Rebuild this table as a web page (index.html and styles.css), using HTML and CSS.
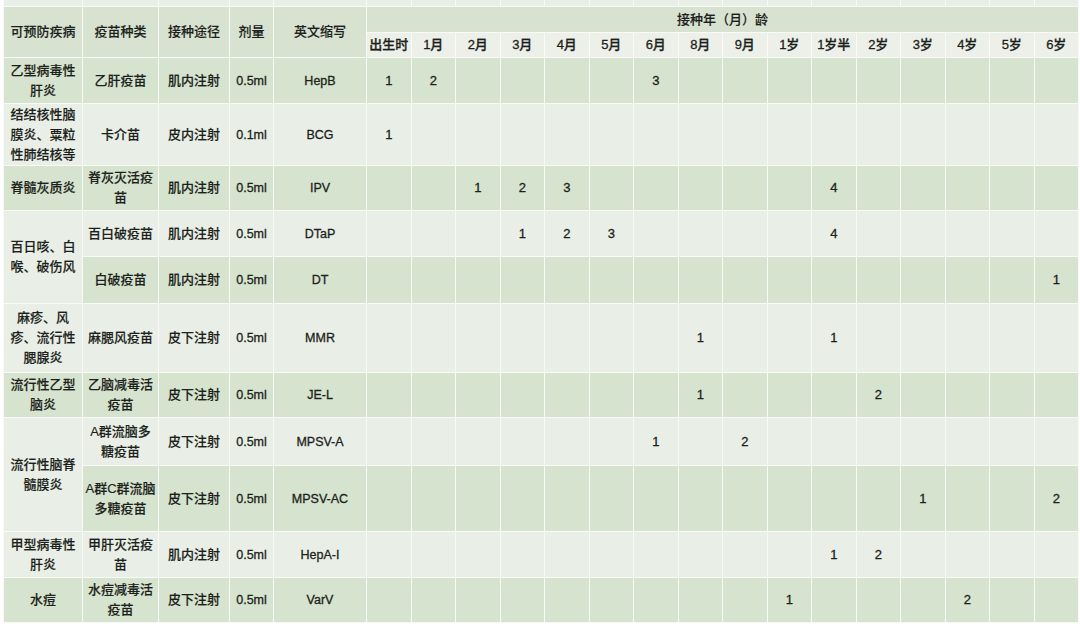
FILE: index.html
```html
<!DOCTYPE html>
<html lang="zh-CN">
<head>
<meta charset="utf-8">
<title>疫苗接种时间表</title>
<link rel="stylesheet" href="styles.css">
</head>
<body>
<div class="sheet">
<table class="schedule">
  <colgroup>
    <col class="c-disease"><col class="c-vaccine"><col class="c-route"><col class="c-dose"><col class="c-abbr">
    <col class="c-age"><col class="c-age"><col class="c-age"><col class="c-age"><col class="c-age"><col class="c-age"><col class="c-age"><col class="c-age">
    <col class="c-age"><col class="c-age"><col class="c-age"><col class="c-age"><col class="c-age"><col class="c-age"><col class="c-age"><col class="c-age">
  </colgroup>
  <tbody>
    <tr class="strip light">
      <td></td><td></td><td></td><td></td><td></td>
      <td></td><td></td><td></td><td></td><td></td><td></td><td></td><td></td>
      <td></td><td></td><td></td><td></td><td></td><td></td><td></td><td></td>
    </tr>
    <tr class="head1">
      <th rowspan="2" class="hd">可预防疾病</th>
      <th rowspan="2" class="hd">疫苗种类</th>
      <th rowspan="2" class="hd">接种途径</th>
      <th rowspan="2" class="hd">剂量</th>
      <th rowspan="2" class="hd">英文缩写</th>
      <th colspan="16" class="hd">接种年（月）龄</th>
    </tr>
    <tr class="head2">
      <th>出生时</th><th>1月</th><th>2月</th><th>3月</th><th>4月</th><th>5月</th><th>6月</th><th>8月</th>
      <th>9月</th><th>1岁</th><th>1岁半</th><th>2岁</th><th>3岁</th><th>4岁</th><th>5岁</th><th>6岁</th>
    </tr>
    <tr class="dark r46">
      <td>乙型病毒性<br>肝炎</td><td>乙肝疫苗</td><td>肌内注射</td><td class="lat">0.5ml</td><td class="lat">HepB</td>
      <td class="n">1</td><td class="n">2</td><td></td><td></td><td></td><td></td><td class="n">3</td><td></td>
      <td></td><td></td><td></td><td></td><td></td><td></td><td></td><td></td>
    </tr>
    <tr class="light r62">
      <td>结结核性脑<br>膜炎、粟粒<br>性肺结核等</td><td>卡介苗</td><td>皮内注射</td><td class="lat">0.1ml</td><td class="lat">BCG</td>
      <td class="n">1</td><td></td><td></td><td></td><td></td><td></td><td></td><td></td>
      <td></td><td></td><td></td><td></td><td></td><td></td><td></td><td></td>
    </tr>
    <tr class="dark r45">
      <td>脊髓灰质炎</td><td>脊灰灭活疫<br>苗</td><td>肌内注射</td><td class="lat">0.5ml</td><td class="lat">IPV</td>
      <td></td><td></td><td class="n">1</td><td class="n">2</td><td class="n">3</td><td></td><td></td><td></td>
      <td></td><td></td><td class="n">4</td><td></td><td></td><td></td><td></td><td></td>
    </tr>
    <tr class="light r46">
      <td rowspan="2" class="light">百日咳、白<br>喉、破伤风</td><td>百白破疫苗</td><td>肌内注射</td><td class="lat">0.5ml</td><td class="lat">DTaP</td>
      <td></td><td></td><td></td><td class="n">1</td><td class="n">2</td><td class="n">3</td><td></td><td></td>
      <td></td><td></td><td class="n">4</td><td></td><td></td><td></td><td></td><td></td>
    </tr>
    <tr class="dark r47">
      <td>白破疫苗</td><td>肌内注射</td><td class="lat">0.5ml</td><td class="lat">DT</td>
      <td></td><td></td><td></td><td></td><td></td><td></td><td></td><td></td>
      <td></td><td></td><td></td><td></td><td></td><td></td><td></td><td class="n">1</td>
    </tr>
    <tr class="light r69">
      <td>麻疹、风<br>疹、流行性<br>腮腺炎</td><td>麻腮风疫苗</td><td>皮下注射</td><td class="lat">0.5ml</td><td class="lat">MMR</td>
      <td></td><td></td><td></td><td></td><td></td><td></td><td></td><td class="n">1</td>
      <td></td><td></td><td class="n">1</td><td></td><td></td><td></td><td></td><td></td>
    </tr>
    <tr class="dark r45">
      <td>流行性乙型<br>脑炎</td><td>乙脑减毒活<br>疫苗</td><td>皮下注射</td><td class="lat">0.5ml</td><td class="lat">JE-L</td>
      <td></td><td></td><td></td><td></td><td></td><td></td><td></td><td class="n">1</td>
      <td></td><td></td><td></td><td class="n">2</td><td></td><td></td><td></td><td></td>
    </tr>
    <tr class="light r48">
      <td rowspan="2" class="light">流行性脑脊<br>髓膜炎</td><td>A群流脑多<br>糖疫苗</td><td>皮下注射</td><td class="lat">0.5ml</td><td class="lat">MPSV-A</td>
      <td></td><td></td><td></td><td></td><td></td><td></td><td class="n">1</td><td></td>
      <td class="n">2</td><td></td><td></td><td></td><td></td><td></td><td></td><td></td>
    </tr>
    <tr class="dark r66">
      <td>A群C群流脑<br>多糖疫苗</td><td>皮下注射</td><td class="lat">0.5ml</td><td class="lat">MPSV-AC</td>
      <td></td><td></td><td></td><td></td><td></td><td></td><td></td><td></td>
      <td></td><td></td><td></td><td></td><td class="n">1</td><td></td><td></td><td class="n">2</td>
    </tr>
    <tr class="light r46">
      <td>甲型病毒性<br>肝炎</td><td>甲肝灭活疫<br>苗</td><td>肌内注射</td><td class="lat">0.5ml</td><td class="lat">HepA-I</td>
      <td></td><td></td><td></td><td></td><td></td><td></td><td></td><td></td>
      <td></td><td></td><td class="n">1</td><td class="n">2</td><td></td><td></td><td></td><td></td>
    </tr>
    <tr class="dark r45">
      <td>水痘</td><td>水痘减毒活<br>疫苗</td><td>皮下注射</td><td class="lat">0.5ml</td><td class="lat">VarV</td>
      <td></td><td></td><td></td><td></td><td></td><td></td><td></td><td></td>
      <td></td><td class="n">1</td><td></td><td></td><td></td><td class="n">2</td><td></td><td></td>
    </tr>
  </tbody>
</table>
</div>
</body>
</html>
```

FILE: styles.css
```css
html, body {
  margin: 0;
  padding: 0;
  background: #ffffff;
}

body {
  font-family: "Liberation Sans", "Noto Sans CJK SC", sans-serif;
  font-size: 13px;
  color: #1c1f1b;
}

.sheet {
  padding: 0 2px 4px 3px;
}

.schedule {
  width: 1075px;
  table-layout: fixed;
  border-collapse: collapse;
}

.c-disease { width: 79px; }
.c-vaccine { width: 76px; }
.c-route { width: 71px; }
.c-dose { width: 44px; }
.c-abbr { width: 93px; }
.c-age { width: 44.5px; }

.schedule td,
.schedule th {
  border: 1px solid #f7faf5;
  text-align: center;
  vertical-align: middle;
  padding: 0;
  line-height: 20px;
  font-weight: 500;
  white-space: nowrap;
  -webkit-text-stroke: 0.15px currentColor;
}

.strip td {
  height: 6px;
  border-top: 0;
  background: #e8eee4;
}

.head1 th {
  height: 24px;
}

.head1 .hd {
  background: #d8e2d1;
}

.head1 th[colspan] {
  padding-top: 1px;
}

.head2 th {
  height: 24px;
  background: #ecf0e9;
}

.dark td {
  background: #d6e3ce;
}

.light td,
.dark td.light {
  background: #e9efe6;
}

.r45 td { height: 44px; }
.r46 td { height: 45px; }
.r47 td { height: 46px; }
.r48 td { height: 47px; }
.r62 td { height: 61px; }
.r66 td { height: 65px; }
.r69 td { height: 68px; }

.schedule .lat,
.schedule .n,
.schedule .head2 th {
  -webkit-text-stroke: 0.3px currentColor;
}

.lat {
  font-size: 12.5px;
}
```
